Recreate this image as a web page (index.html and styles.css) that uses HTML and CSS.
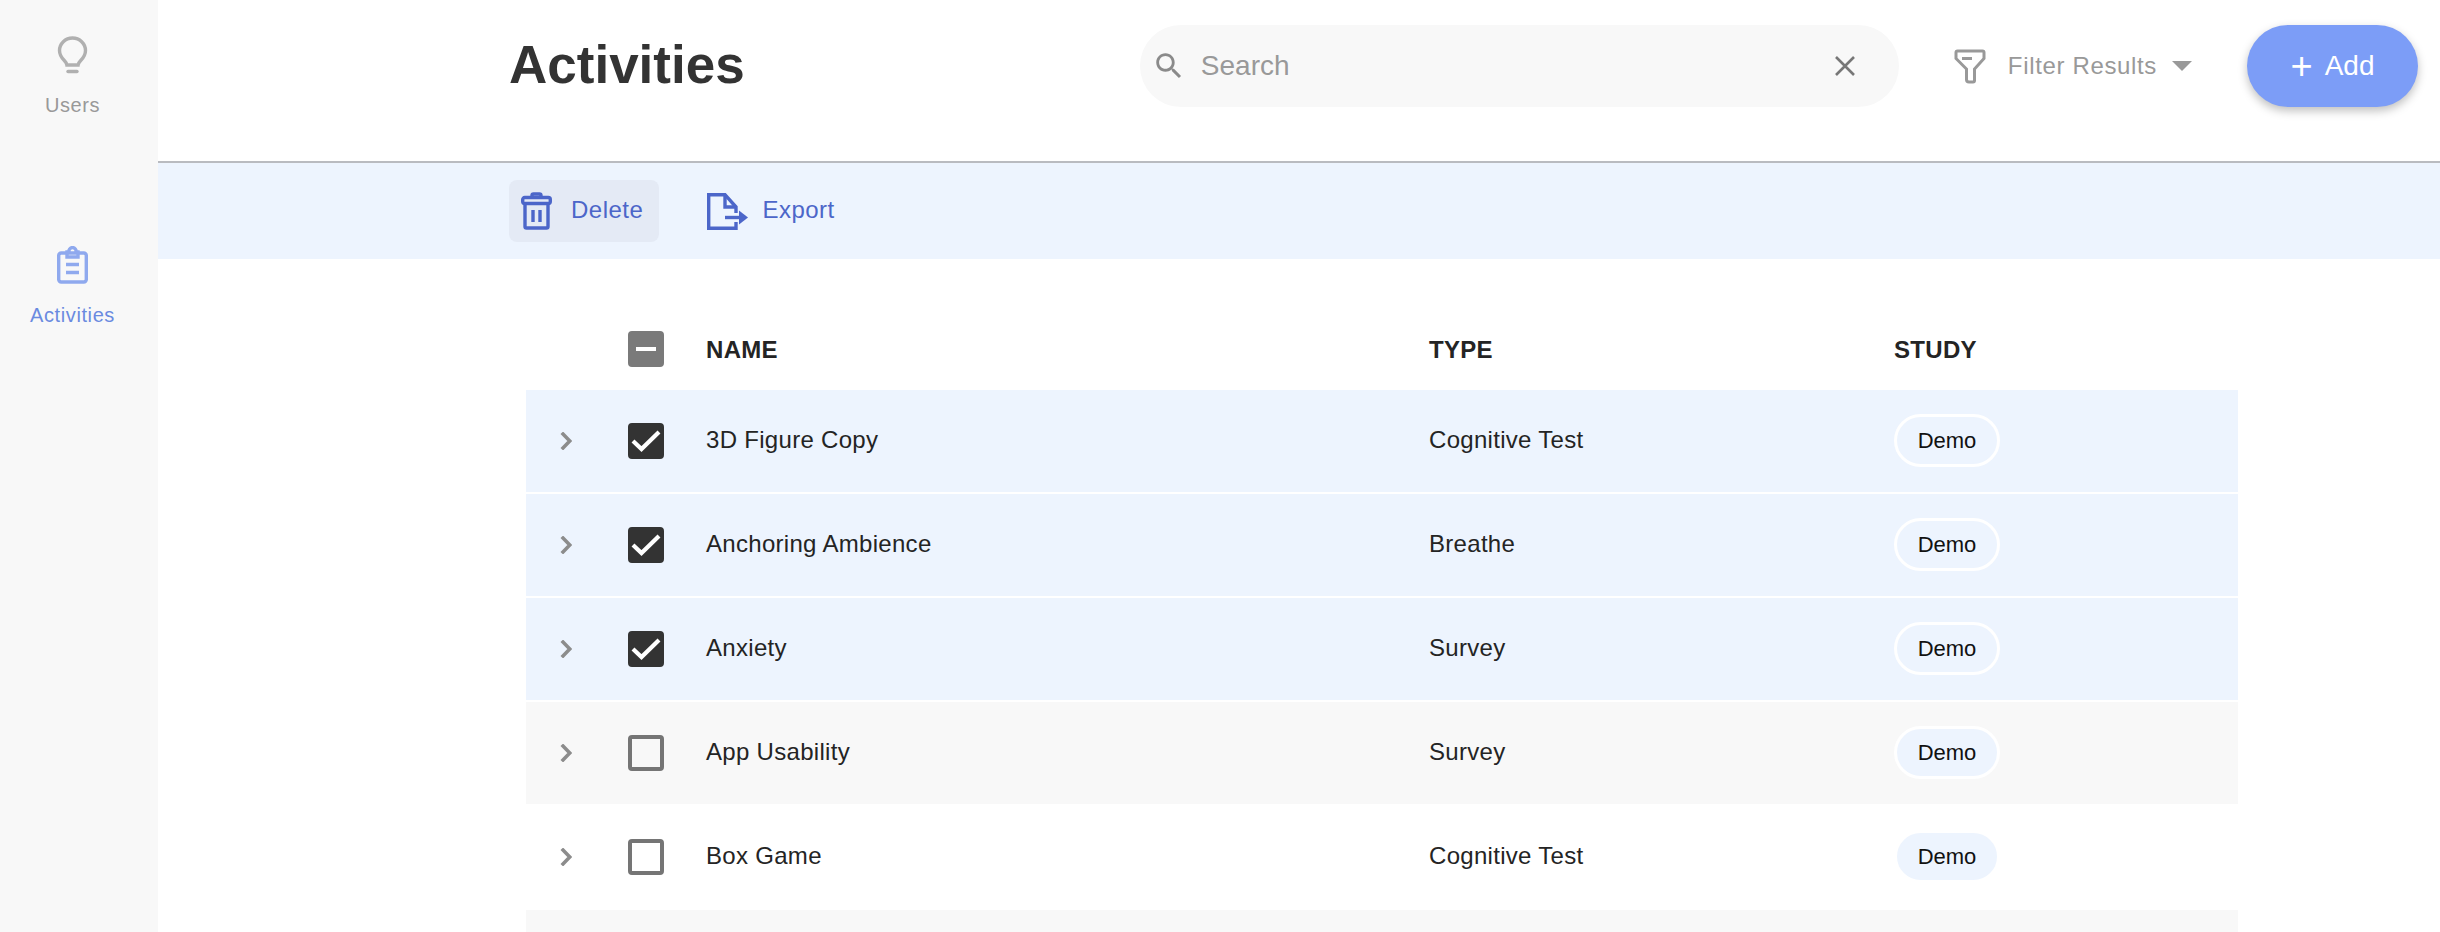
FILE: index.html
```html
<!DOCTYPE html>
<html lang="en">
<head>
    <meta charset="UTF-8">
    <title>Activities</title>
    <link rel="stylesheet" href="styles.css">
</head>
<body>
    <svg class="sprite" aria-hidden="true">
        <symbol id="chevron" viewBox="0 0 12 18"><path d="M1.800 .8L9.800 9L1.800 17.200" fill="none" stroke="currentColor" stroke-width="3.600"/></symbol>
        <symbol id="check" viewBox="0 0 36 36"><path d="M5 18l8.500 8L31 9" fill="none" stroke="#fff" stroke-width="4.200"/></symbol>
    </svg>
    <nav class="sidebar">
        <a class="nav-item">
            <svg class="nav-icon" viewBox="0 0 30 38" fill="none" stroke="#b0b0b0" stroke-width="3.400">
                <path d="M15 2C7.800 2 2 7.600 2 14.500c0 4.500 2.500 7.800 5 10.300 1.300 1.300 2.200 2.600 2.400 4.200h11.200c.2-1.600 1.100-2.900 2.400-4.200 2.500-2.500 5-5.800 5-10.300C28 7.600 22.200 2 15 2z"/>
                <path d="M10.500 35.500h9" stroke-linecap="round"/>
            </svg>
            <span>Users</span>
        </a>
        <a class="nav-item active">
            <svg class="nav-icon" viewBox="0 0 31 38" fill="none" stroke="#8fa9ee" stroke-width="3.400">
                <rect x="1.700" y="7" width="27.600" height="29" rx="2.500"/>
                <path d="M10 11V6h2a3.600 3.600 0 1 1 7 0h2v5z"/>
                <path d="M9 18.500h13M9 26.500h13"/>
            </svg>
            <span>Activities</span>
        </a>
    </nav>
    <main class="main">
        <header class="topbar">
            <h1>Activities</h1>
            <div class="search">
                <svg class="search-icon" viewBox="0 0 24 24" fill="#8a8a8a"><path d="M15.500 14h-.79l-.28-.27C15.410 12.590 16 11.110 16 9.500 16 5.910 13.090 3 9.500 3S3 5.910 3 9.500 5.910 16 9.500 16c1.610 0 3.090-.59 4.230-1.570l.27.28v.79l5 4.990L20.490 19l-4.990-5zm-6 0C7.010 14 5 11.990 5 9.500S7.010 5 9.500 5 14 7.010 14 9.500 11.990 14 9.500 14z"/></svg>
                <span class="search-text">Search</span>
                <svg class="clear-icon" viewBox="0 0 22 22" fill="none" stroke="#777" stroke-width="2.600"><path d="M2 2l18 18M20 2L2 20"/></svg>
            </div>
            <div class="filter">
                <svg class="filter-icon" viewBox="0 0 32 35" fill="none" stroke="#999" stroke-width="3">
                    <path d="M3.500 2H28.500a1.500 1.500 0 0 1 1.500 1.500V9.500L20.500 20V31.500a1.500 1.500 0 0 1-1.500 1.500H15a2.500 2.500 0 0 1-2.500-2.500V20L2 9.500V3.500A1.500 1.500 0 0 1 3.500 2z"/>
                    <path d="M8 9.500h10"/>
                </svg>
                <span>Filter Results</span>
                <i class="caret"></i>
            </div>
            <button class="add-btn"><span class="plus">+</span>Add</button>
        </header>
        <div class="toolbar">
            <button class="tool-btn hovered">
                <svg class="trash-icon" viewBox="0 0 31 38" fill="none" stroke="#4c66c9" stroke-width="3.400">
                    <rect x="1.700" y="5.500" width="27.600" height="6" rx="2"/>
                    <path d="M11 5V3.500A1.500 1.500 0 0 1 12.500 2h6A1.500 1.500 0 0 1 20 3.500V5"/>
                    <path d="M4 11.500V34.500a1.500 1.500 0 0 0 1.500 1.500h20A1.500 1.500 0 0 0 27 34.500V11.500"/>
                    <path d="M12 18v12M19 18v12"/>
                </svg>
                Delete
            </button>
            <button class="tool-btn">
                <svg class="export-icon" viewBox="0 0 41 37" fill="none" stroke="#4c66c9" stroke-width="3.400">
                    <path d="M29 20V14L18 1.700H1.700V35.300H29V29"/>
                    <path d="M18 1.700V14H29"/>
                    <path d="M18 24.500H36"/>
                    <path d="M32 17.500L41 24.500L32 31.500z" fill="#4c66c9" stroke="none"/>
                </svg>
                Export
            </button>
        </div>
        <section class="table">
            <div class="row head">
                <span></span>
                <span class="box partial"></span>
                <span>NAME</span>
                <span>TYPE</span>
                <span>STUDY</span>
            </div>
            <div class="row selected">
                <svg class="chevron"><use href="#chevron"/></svg>
                <span class="box checked"><svg><use href="#check"/></svg></span>
                <span>3D Figure Copy</span>
                <span>Cognitive Test</span>
                <span><b class="chip">Demo</b></span>
            </div>
            <div class="row selected">
                <svg class="chevron"><use href="#chevron"/></svg>
                <span class="box checked"><svg><use href="#check"/></svg></span>
                <span>Anchoring Ambience</span>
                <span>Breathe</span>
                <span><b class="chip">Demo</b></span>
            </div>
            <div class="row selected">
                <svg class="chevron"><use href="#chevron"/></svg>
                <span class="box checked"><svg><use href="#check"/></svg></span>
                <span>Anxiety</span>
                <span>Survey</span>
                <span><b class="chip">Demo</b></span>
            </div>
            <div class="row grey">
                <svg class="chevron"><use href="#chevron"/></svg>
                <span class="box"></span>
                <span>App Usability</span>
                <span>Survey</span>
                <span><b class="chip">Demo</b></span>
            </div>
            <div class="row">
                <svg class="chevron"><use href="#chevron"/></svg>
                <span class="box"></span>
                <span>Box Game</span>
                <span>Cognitive Test</span>
                <span><b class="chip">Demo</b></span>
            </div>
            <div class="row grey cut"></div>
        </section>
    </main>
</body>
</html>
```

FILE: styles.css
```css
* {
    box-sizing: border-box;
}
body {
    margin: 0;
    display: flex;
    height: 100vh;
    overflow: hidden;
    background: #fff;
    color: #242424;
    font-family: "Liberation Sans", Arial, sans-serif;
    font-size: 24px;
}
.sprite {
    width: 0;
    height: 0;
    position: absolute;
}

/* sidebar */
.sidebar {
    flex: 0 0 158px;
    padding-right: 13px;
    background: #f8f8f8;
}
.nav-item {
    display: flex;
    flex-direction: column;
    align-items: center;
    height: 210px;
    padding-top: 36px;
    font-size: 20px;
    letter-spacing: .6px;
    color: #999;
}
.nav-item.active {
    color: #6a8ae0;
}
.nav-icon {
    width: 31px;
    height: 38px;
    margin-bottom: 20px;
}

/* top bar */
.main {
    flex: 1;
    min-width: 0;
}
.topbar {
    display: flex;
    align-items: flex-start;
    height: 163px;
    padding: 25px 22px 0 351px;
    border-bottom: 2px solid #b9bbc0;
}
h1 {
    margin: 9px 0 0;
    font-size: 53px;
    line-height: 62px;
    color: #333;
}
.search {
    display: flex;
    align-items: center;
    width: 759px;
    height: 82px;
    margin-left: auto;
    padding: 0 43px 0 12px;
    background: #f8f8f8;
    border-radius: 41px;
}
.search-icon {
    width: 34px;
    height: 34px;
}
.search-text {
    flex: 1;
    margin-left: 15px;
    font-size: 28px;
    color: #999;
}
.clear-icon {
    width: 22px;
    height: 22px;
}
.filter {
    display: flex;
    align-items: center;
    height: 82px;
    margin-left: 55px;
    color: #999;
    letter-spacing: .65px;
}
.filter-icon {
    width: 32px;
    height: 35px;
    margin-right: 22px;
}
.caret {
    margin-left: 15px;
    border-left: 10px solid transparent;
    border-right: 10px solid transparent;
    border-top: 10px solid #999;
}
.add-btn {
    display: flex;
    align-items: center;
    justify-content: center;
    width: 171px;
    height: 82px;
    margin-left: 55px;
    border: none;
    border-radius: 41px;
    background: #7c9df7;
    color: #fff;
    font: inherit;
    font-size: 28px;
    box-shadow: 0 4px 10px rgba(0,0,0,.25);
}
.plus {
    margin-right: 12px;
    font-size: 38px;
    line-height: 1;
}

/* toolbar */
.toolbar {
    display: flex;
    align-items: center;
    gap: 36px;
    height: 96px;
    padding-left: 351px;
    background: #edf4fe;
}
.tool-btn {
    display: flex;
    align-items: center;
    height: 62px;
    padding: 0 16px 2px 12px;
    border: none;
    border-radius: 8px;
    background: none;
    color: #4c66c9;
    font: inherit;
    letter-spacing: .5px;
}
.tool-btn.hovered {
    background: #e4eaf5;
}
.trash-icon {
    width: 31px;
    height: 38px;
    margin: 2px 19px 0 0;
}
.export-icon {
    width: 41px;
    height: 37px;
    margin: 2px 14px 0 0;
}

/* table */
.table {
    margin-left: 368px;
    width: 1712px;
    padding-top: 72px;
}
.row {
    display: grid;
    grid-template-columns: 102px 78px 723px 465px 1fr;
    align-items: center;
    height: 102px;
    margin-bottom: 2px;
    letter-spacing: .3px;
}
.row > span {
    padding-bottom: 2px;
}
.row.head {
    height: 36px;
    margin-bottom: 23px;
    font-weight: bold;
}
.row.head > span {
    padding: 2px 0 0;
}
.row.selected {
    background: #edf4fe;
}
.row.grey {
    background: #f8f8f8;
}
.row.cut {
    height: 22px;
    margin: 0;
}
.chevron {
    justify-self: start;
    width: 12px;
    height: 18px;
    margin-left: 34px;
    color: #8c8c8c;
}
.row > .box,
.row.head > .box {
    position: relative;
    width: 36px;
    height: 36px;
    padding: 0;
    border: 4px solid #757575;
    border-radius: 4px;
}
.box svg {
    display: block;
    width: 36px;
    height: 36px;
    margin: -4px;
}
.row > .box.checked {
    background: #333;
    border-color: #333;
}
.row.head > .box.partial {
    background: #7a7a7a;
    border-color: #7a7a7a;
}
.box.partial::after {
    content: "";
    position: absolute;
    left: 4px;
    top: 12px;
    width: 20px;
    height: 4px;
    background: #fff;
}
.chip {
    display: inline-block;
    width: 106px;
    height: 53px;
    border: 3px solid #fff;
    border-radius: 27px;
    background: #edf4fe;
    color: #111;
    font-size: 22px;
    font-weight: normal;
    letter-spacing: 0;
    line-height: 47px;
    text-align: center;
}
```
